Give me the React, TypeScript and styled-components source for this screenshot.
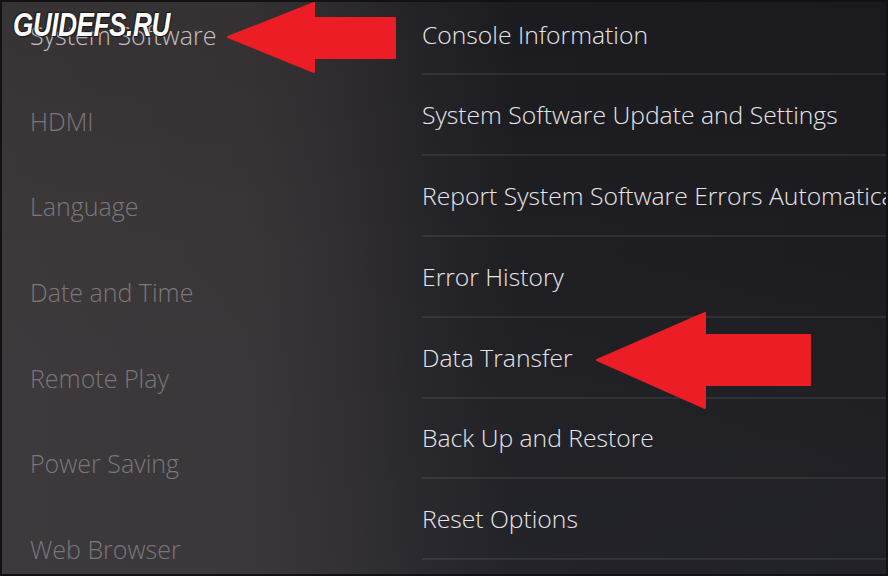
import styled, { createGlobalStyle } from 'styled-components';

const GlobalStyle = createGlobalStyle`
  html, body {
    margin: 0;
    padding: 0;
    background: #111;
  }
`;

const Screen = styled.div`
  position: relative;
  width: 888px;
  height: 576px;
  box-sizing: border-box;
  border: 2px solid #121213;
  overflow: hidden;
  display: flex;
  font-family: 'Open Sans', 'Noto Sans', sans-serif;
  background:
    linear-gradient(180deg, rgba(0, 0, 0, 0.1) 0%, rgba(0, 0, 0, 0) 45%, rgba(60, 64, 80, 0.14) 100%),
    linear-gradient(
      90deg,
      #3d393b 0%,
      #3a3638 28%,
      #322f32 38%,
      #27262a 47%,
      #1f1f23 58%,
      #1d1d21 100%
    );
`;

const Sidebar = styled.nav`
  width: 420px;
  flex-shrink: 0;
  display: flex;
  flex-direction: column;
`;

const SideList = styled.div`
  margin-top: -10px;
  display: flex;
  flex-direction: column;
`;

const SideItem = styled.div<{ $active?: boolean }>`
  height: 85.7px;
  flex-shrink: 0;
  display: flex;
  align-items: center;
  padding-left: 28px;
  font-size: 25px;
  font-weight: 300;
  color: ${(p) => (p.$active ? '#c4c0c2' : '#7a777a')};
  white-space: nowrap;
`;

const Content = styled.main`
  flex: 1;
  min-width: 0;
  display: flex;
  flex-direction: column;
`;

const RowList = styled.div`
  margin-top: -7.4px;
  display: flex;
  flex-direction: column;
`;

const Row = styled.div`
  height: 80.8px;
  box-sizing: border-box;
  flex-shrink: 0;
  display: flex;
  align-items: center;
  border-bottom: 2px solid rgba(255, 255, 255, 0.075);
  font-size: 24.7px;
  font-weight: 300;
  color: #e6e6e8;
  white-space: nowrap;
  overflow: hidden;
`;

const Watermark = styled.div`
  position: absolute;
  left: 11px;
  top: 4px;
  font-family: 'Liberation Sans', Arial, sans-serif;
  font-size: 33px;
  font-weight: 700;
  font-style: italic;
  color: #ffffff;
  transform: scaleX(0.79);
  transform-origin: left center;
  letter-spacing: -0.5px;
  text-shadow: 0 0 2px #1a1a1a, 1px 1px 1px #1a1a1a, -1px -1px 1px #1a1a1a;
`;

const Overlay = styled.svg`
  position: absolute;
  left: -2px;
  top: -2px;
  width: 888px;
  height: 576px;
  pointer-events: none;
`;

const leftItems = [
  'System Software',
  'HDMI',
  'Language',
  'Date and Time',
  'Remote Play',
  'Power Saving',
  'Web Browser',
];

const rows = [
  'Console Information',
  'System Software Update and Settings',
  'Report System Software Errors Automatically',
  'Error History',
  'Data Transfer',
  'Back Up and Restore',
  'Reset Options',
];

export default function App() {
  return (
    <>
      <GlobalStyle />
      <Screen>
        <Sidebar>
          <SideList>
            {leftItems.map((item, i) => (
              <SideItem key={item} $active={i === 0}>
                {item}
              </SideItem>
            ))}
          </SideList>
        </Sidebar>

        <Content>
          <RowList>
            {rows.map((row) => (
              <Row key={row}>{row}</Row>
            ))}
          </RowList>
        </Content>

        <Overlay viewBox="0 0 888 576">
          <polygon
            points="228,37 314,3 314,18 395,18 395,58 314,58 314,72"
            fill="#ec1d25"
            stroke="#ec1d25"
            strokeWidth="2"
            strokeLinejoin="round"
          />
          <polygon
            points="597,360 705,313 705,335 810,335 810,385 705,385 705,408"
            fill="#ec1d25"
            stroke="#ec1d25"
            strokeWidth="2"
            strokeLinejoin="round"
          />
        </Overlay>

        <Watermark>GUIDEFS.RU</Watermark>
      </Screen>
    </>
  );
}
